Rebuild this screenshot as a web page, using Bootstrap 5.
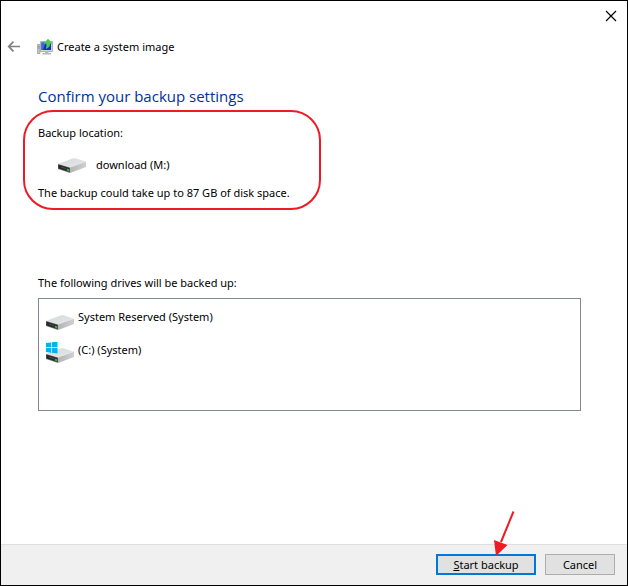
<!DOCTYPE html>
<html lang="en">
<head>
<meta charset="utf-8">
<meta name="viewport" content="width=device-width, initial-scale=1">
<title>Create a system image</title>
<link href="https://cdn.jsdelivr.net/npm/bootstrap@5.3.0/dist/css/bootstrap.min.css" rel="stylesheet">
<style>
body { font-family: "Noto Sans", "Open Sans", sans-serif; font-size: 11px; line-height: 16px; color: #000; background: #fff; }
.wizard { border: 1px solid #000; }
.close-btn { width: 32px; height: 30px; color: #000; }
.title-row { height: 32px; padding-left: 6px; }
.wizard-title { font-size: 11px; line-height: 16px; font-weight: 400; margin-left: 4px; }
.content { padding: 23px 46px 0 22px; }
.headline { font-family: "Open Sans", "Noto Sans", sans-serif; font-size: 15px; line-height: 20px; font-weight: 400; color: #003399; padding-left: 15px; }
.location { width: 298px; border: 2px solid #ed1c24; border-radius: 30px; padding: 13px 0 7px 13px; margin-top: 4px; }
.location-drive { gap: 10px; padding: 16px 0 12px 20px; }
.drives { padding: 65px 0 0 15px; }
.drives-label { margin-bottom: 7px; }
.drive-list { border: 1px solid #828790; height: 113px; padding: 10px 7px; }
.drive-list li { gap: 4px; height: 33px; }
.actions { background: #f0f0f0; border-top: 1px solid #dfdfdf; padding: 9px 12px 10px; gap: 9px; }
.dlg-btn { height: 21px; line-height: 14px; font-size: 11px; border: 1px solid #adadad; background: #e1e1e1; color: #000; width: 70px; padding: 0; }
.dlg-btn-main { border: 2px solid #0078d7; width: 100px; }
.pointer { left: 56px; top: -45px; pointer-events: none; }
</style>
<script src="https://cdn.jsdelivr.net/npm/bootstrap@5.3.0/dist/js/bootstrap.bundle.min.js"></script>
</head>
<body>
<svg width="0" height="0" class="position-absolute" aria-hidden="true">
  <defs>
    <linearGradient id="lid" x1="0" y1="0" x2="1" y2="1"><stop offset="0" stop-color="#d6d7d9"/><stop offset="1" stop-color="#e8e9ea"/></linearGradient>
    <linearGradient id="edge" x1="0" y1="0" x2="1" y2="0"><stop offset="0" stop-color="#b4b4b5"/><stop offset="1" stop-color="#d0d0d1"/></linearGradient>
    <symbol id="drive" viewBox="0 0 28 15">
      <path d="M0 6 14.500.4Q16 0 17.500.3L28 3.800 12 9.600Z" fill="url(#lid)"/>
      <path d="M12 9.600 28 3.800V9L13.500 14.600 12 15Z" fill="url(#edge)"/>
      <path d="M0 6 12 9.600V15L0 11Z" fill="#77797b"/>
      <path d="M.4 6.600 11.600 10.100V14L.4 10.400Z" fill="#27292b"/>
      <path d="M3 9 8 10.700" stroke="#4b4e50"/>
      <path d="M8.800 10.600 11.300 11.400V13.400L8.800 12.600Z" fill="#2fb43a"/>
    </symbol>
  </defs>
</svg>
<main class="wizard min-vh-100 d-flex flex-column">
  <header>
    <div class="d-flex justify-content-end">
      <button type="button" class="close-btn btn p-0 border-0 rounded-0 d-flex align-items-center justify-content-center" aria-label="Close">
        <svg width="12" height="12" viewBox="0 0 12 12"><path d="M1 1 11 11M11 1 1 11" stroke="#000" stroke-width="1.200"/></svg>
      </button>
    </div>
    <div class="title-row d-flex align-items-center">
      <button type="button" class="btn p-0 border-0 d-flex" aria-label="Back">
        <svg width="14" height="12" viewBox="0 0 14 12"><path d="M13 5.500H2M6.500.7 1.700 5.500 6.500 10.300" fill="none" stroke="#808080" stroke-width="1.700"/></svg>
      </button>
      <svg class="ms-3" width="16" height="16" viewBox="0 0 16 16" aria-hidden="true">
        <path d="M.2 5.500H3V14.500H.2Z" fill="#c3c7ca" stroke="#92979c" stroke-width=".7"/>
        <path d="M.8 7.500H2.500M.8 9H2.500" stroke="#73797e" stroke-width=".7"/>
        <path d="M3.500 2.500H15.500V12.500H3.500Z" fill="#d3d5d8" stroke="#9a9ea2" stroke-width=".7"/>
        <path d="M4.500 3.500H14V11H4.500Z" fill="#1130b4"/>
        <path d="M4.500 3.500H8.500L6 11H4.500Z" fill="#3a68df"/>
        <path d="M8 12.500H11.500V14H8ZM5.500 14H14V15.500H5.500Z" fill="#b4b9bd"/>
        <path d="M11 0 15.300 4.500H13Q13 8 9.200 9.600 10.200 7 9.500 4.500H7Z" fill="#43cf49" stroke="#5fca63" stroke-width=".5"/>
      </svg>
      <h1 class="wizard-title mb-0">Create a system image</h1>
    </div>
  </header>
  <div class="content flex-grow-1">
    <h2 class="headline mb-0">Confirm your backup settings</h2>
    <section class="location mw-100">
      <div>Backup location:</div>
      <div class="location-drive d-flex align-items-end">
        <svg width="28" height="15" aria-hidden="true"><use href="#drive"/></svg>
        <span>download (M:)</span>
      </div>
      <div>The backup could take up to 87 GB of disk space.</div>
    </section>
    <section class="drives">
      <div class="drives-label" id="drives-label">The following drives will be backed up:</div>
      <ul class="drive-list list-unstyled mb-0" aria-labelledby="drives-label">
        <li class="d-flex align-items-start">
          <svg width="28" height="22" viewBox="0 0 28 22" aria-hidden="true"><use href="#drive" y="6" width="28" height="15"/></svg>
          <span>System Reserved (System)</span>
        </li>
        <li class="d-flex align-items-start">
          <svg width="28" height="22" viewBox="0 0 28 22" aria-hidden="true">
            <use href="#drive" y="6" width="28" height="15"/>
            <path d="M0 1 5 .4V5.200H0ZM5.700.3 11.500-.4V5.200H5.700ZM0 6H5V10.800L0 10.100ZM5.700 6H11.500V11.600L5.700 10.800Z" fill="#00b4ef"/>
          </svg>
          <span>(C:) (System)</span>
        </li>
      </ul>
    </section>
  </div>
  <footer class="actions d-flex justify-content-end">
    <div class="position-relative">
      <button type="button" class="dlg-btn dlg-btn-main d-block"><u>S</u>tart backup</button>
      <svg class="pointer position-absolute" width="26" height="50" viewBox="0 0 26 50" aria-hidden="true">
        <path d="M21.500 2.500 9 33" stroke="#ed1c24" stroke-width="2"/>
        <path d="M2 31 15.500 36 4 47Z" fill="#ed1c24"/>
      </svg>
    </div>
    <button type="button" class="dlg-btn">Cancel</button>
  </footer>
</main>
</body>
</html>
